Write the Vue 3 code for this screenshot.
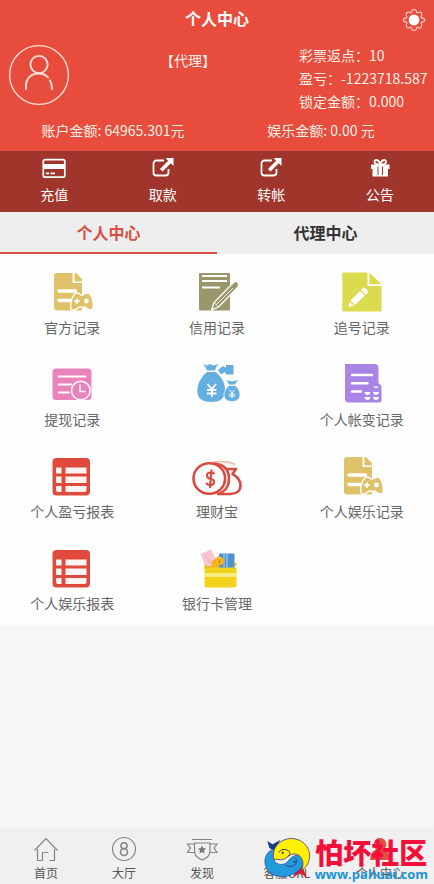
<script setup>
import { ref } from 'vue'

const info = [
  { label: '彩票返点', value: '10' },
  { label: '盈亏', value: '-1223718.587' },
  { label: '锁定金额', value: '0.000' },
]
const actions = [
  { label: '充值', icon: 'card' },
  { label: '取款', icon: 'out' },
  { label: '转帐', icon: 'out' },
  { label: '公告', icon: 'gift' },
]
const tabs = ['个人中心', '代理中心']
const activeTab = ref(0)
const items = [
  { label: '官方记录', icon: 'game' },
  { label: '信用记录', icon: 'credit' },
  { label: '追号记录', icon: 'chase' },
  { label: '提现记录', icon: 'withdraw' },
  { label: '', icon: 'bags' },
  { label: '个人帐变记录', icon: 'ledger' },
  { label: '个人盈亏报表', icon: 'table' },
  { label: '理财宝', icon: 'purse' },
  { label: '个人娱乐记录', icon: 'game' },
  { label: '个人娱乐报表', icon: 'table' },
  { label: '银行卡管理', icon: 'wallet' },
]
const nav = [
  { label: '首页', icon: 'home' },
  { label: '大厅', icon: 'hall' },
  { label: '发现', icon: 'badge' },
  { label: '客服URL', icon: 'service' },
  { label: '个人中心', icon: 'me' },
]
</script>

<template>
  <div class="page">
    <header class="head">
      <div class="title-row">
        <h1>个人中心</h1>
        <button class="gear" aria-label="设置">
          <svg viewBox="0 0 24 24" width="24" height="24">
            <path d="M9.8 2.4 Q12 .6 14.2 2.4 Q14.2 4.6 15.4 4.8 Q17.4 3.6 18.6 4.3 Q20.6 5.6 19.5 8 Q18.6 9.4 19.6 9.9 Q22.4 9.8 22.7 12 Q22.4 14.2 19.6 14.1 Q18.6 14.8 19.6 16.2 Q20.4 18.4 18.6 19.7 Q17.4 20.4 15.4 19.2 Q14.2 19.4 14.2 21.6 Q12 23.4 9.8 21.6 Q9.8 19.4 8.6 19.2 Q6.6 20.4 5.4 19.7 Q3.6 18.4 4.4 16.2 Q5.4 14.8 4.4 14.1 Q1.6 14.2 1.3 12 Q1.6 9.8 4.4 9.9 Q5.4 9.4 4.5 8 Q3.4 5.6 5.4 4.3 Q6.6 3.6 8.6 4.8 Q9.8 4.6 9.8 2.4Z" fill="none" stroke="#fbd3cc" stroke-width="1.1" />
            <circle cx="12" cy="12" r="5.4" fill="#fff" />
          </svg>
        </button>
      </div>
      <div class="profile">
        <svg class="avatar" viewBox="0 0 60 60" width="60" height="60" fill="none" stroke="#fde0d6">
          <circle cx="30" cy="30" r="29.4" stroke-width="1.4" />
          <g stroke-width="1.9" stroke-linecap="round">
            <circle cx="30" cy="19.5" r="8.6" />
            <path d="M17 44 V41 C17 33.5 22 28.5 30 28.5 C34 28.5 37 30 39 32.5 M41 35.5 C42.3 38 43 40 43 44" />
          </g>
        </svg>
        <p class="role">【代理】</p>
        <div class="info">
          <p v-for="row in info" :key="row.label">{{ row.label }}：{{ row.value }}</p>
        </div>
      </div>
      <div class="balances">
        <p>账户金额: 64965.301元</p>
        <p>娱乐金额: 0.00 元</p>
      </div>
    </header>

    <div class="actions">
      <button v-for="a in actions" :key="a.label">
        <svg viewBox="0 0 24 22" width="24" height="22">
          <template v-if="a.icon === 'card'">
            <rect x="1.3" y="2.7" width="21.5" height="17.5" rx="2" fill="none" stroke="#fff" stroke-width="1.7" />
            <path d="M2 7h20.5v5H2zM4 15.5h3v1.7H4zM8.500 15.5h4.5v1.7H8.500z" fill="#fff" />
          </template>
          <template v-else-if="a.icon === 'out'">
            <path d="M13 3.5H5.5a3 3 0 0 0-3 3v9a3 3 0 0 0 3 3h9a3 3 0 0 0 3-3V12" fill="none" stroke="#fff" stroke-width="1.8" />
            <path d="M14.5 1H22.5V9L19.8 6.3L11.5 14.5L9 12L17.2 3.7Z" fill="#fff" />
          </template>
          <template v-else>
            <path d="M3 7.5h18.5v4.5H20v7.5H4.5V12H3z" fill="#fff" />
            <path d="M12.2 7.5C10 7.5 6.5 7.5 6.5 5C6.5 2 10.5 2 12.2 7C14 2 18 2 18 5C18 7.5 14.5 7.5 12.2 7.500Z" fill="none" stroke="#fff" stroke-width="1.8" />
            <path d="M10 9.5v8.500M14.5 9.5v8.500" stroke="#a0362b" stroke-width="1" />
          </template>
        </svg>
        <span>{{ a.label }}</span>
      </button>
    </div>

    <div class="tabs" role="tablist">
      <button v-for="(t, i) in tabs" :key="t" role="tab" :aria-selected="activeTab === i" :class="{ active: activeTab === i }" @click="activeTab = i">{{ t }}</button>
    </div>

    <main class="grid">
      <button v-for="item in items" :key="item.label" :aria-label="item.label || '资金'">
        <svg viewBox="0 0 40 40" width="40" height="40">
          <template v-if="item.icon === 'game'">
            <path d="M5 1H20.5V11H30V38.5H5Q2 38.5 2 35.5V4Q2 1 5 1Z" fill="#dfc169" />
            <path d="M22.5 1H24L30 7V9.5H22.5Z" fill="#dfc169" />
            <path d="M7 19H23.5M7 28.5H18" stroke="#fff" stroke-width="3.4" stroke-linecap="round" />
            <path d="M24 22C26.5 21 28 24 30 24C32 24 34 21 36.5 22C39.5 23.5 41 32 40.5 35.5C39.5 39 35.5 36.5 33.5 34.5H26.5C24.5 36.5 20.5 39 19.5 36C18.8 32 21 23.5 24 22Z" fill="#dfc169" stroke="#fff" stroke-width="3" paint-order="stroke" />
            <path d="M25 26.5V32M22.2 29.2H27.8" stroke="#fff" stroke-width="1.8" />
            <circle cx="34.5" cy="29" r="2.4" fill="#fff" />
          </template>
          <template v-else-if="item.icon === 'credit'">
            <rect x="2" y="1" width="31" height="37.5" rx="1" fill="#99976b" />
            <path d="M5 4H30M5 9H30M5 15.5H23" stroke="#fff" stroke-width="1.8" />
            <path d="M35.5 11.5Q38.5 8 41 10.5Q43 13 40.5 15.5L21.5 35L14.5 38L17 30.500Z" fill="#99976b" stroke="#fff" stroke-width="1.3" />
            <path d="M17 30.5L21.5 35M19.500 32.500L36 16" stroke="#fff" stroke-width=".9" />
          </template>
          <template v-else-if="item.icon === 'chase'">
            <path d="M1 .5H25.5V14H39.5V39.5H1Q.3 39.5 .3 38.8V1.2Q.3 .5 1 .5Z" fill="#dadb4e" />
            <path d="M27.3 .5L39.5 12.3H27.3Z" fill="#dadb4e" />
            <path d="M6.5 35L8 29L21 16Q22.500 15 25 17.500Q26.500 19.500 25.500 21L12.500 33.500Z" fill="#fff" />
            <path d="M8 29L12.500 33.500M18.500 18.500L23 23" stroke="#dadb4e" stroke-width="1.2" />
          </template>
          <template v-else-if="item.icon === 'withdraw'">
            <rect x=".5" y="4.5" width="39" height="31.5" rx="3.5" fill="#e884bb" />
            <path d="M7 12.500H33.500M7 20.500H19M7 28.500H17" stroke="#fff" stroke-width="2" stroke-linecap="round" />
            <circle cx="28.8" cy="26.5" r="9.3" fill="#e884bb" stroke="#fff" stroke-width="1.5" />
            <path d="M28 20.500V27.500H33.500" fill="none" stroke="#fff" stroke-width="1.5" />
          </template>
          <template v-else-if="item.icon === 'bags'">
            <path d="M6 0L10 1.500L13 0L16 1.500L21.500 0Q18.500 3 18 6.500H10Q9 3 6 0Z" fill="#62afe0" />
            <path d="M10 8H18.500C24 12 28.500 19 28 27C27.500 35 23 38 14 38C5 38 .3 34 .3 27C.3 19 5 12 10 8Z" fill="#62afe0" />
            <path d="M21 6L26 2L29 4V1H36.500V10.500H29L28 8L24 10.500Z" fill="#62afe0" />
            <path d="M29 16L35 17.500L41 16Q38.500 18.500 38 20.500H32Q31.500 18 29 16Z" fill="#62afe0" />
            <path d="M32 21.500H38C41 23.500 43 27 43 30.500C43 35 40 37.500 35 37.500C30 37.500 27 35 27 30.500C27 27 29.500 23.500 32 21.500Z" fill="#62afe0" stroke="#fff" stroke-width=".7" />
            <path d="M10.500 20L14.800 25L19 20M14.800 25V33M10 26H19.500M10 29.500H19.500" fill="none" stroke="#fff" stroke-width="1.8" />
            <path d="M32.500 26L35 29L37.500 26M35 29V34M32 30H38M32 32H38" fill="none" stroke="#fff" stroke-width="1" />
          </template>
          <template v-else-if="item.icon === 'ledger'">
            <path d="M4 0H32.500Q36.500 0 36.500 4V19L39.500 22V36Q39.500 38.500 37 38.500H6.500Q3 38.500 3 35V1Q3 0 4 0Z" fill="#a985e6" />
            <path d="M10 11H30M10 19.200H25.500M10 27.500H19" stroke="#fff" stroke-width="2.4" stroke-linecap="round" />
            <path d="M31 22.500H37Q34 25.500 31 22.500ZM22.500 28H28.500Q28 31 25.500 31Q23 31 22.500 28ZM31 28H37Q36.500 31 34 31Q31.500 31 31 28ZM22.500 33H28.500Q28 36 25.500 36Q23 36 22.500 33ZM31 33H37Q36.500 36 34 36Q31.500 36 31 33Z" fill="#fff" />
          </template>
          <template v-else-if="item.icon === 'table'">
            <rect x=".5" y="2" width="37.5" height="37.5" rx="4" fill="#e04a3c" />
            <g fill="#fff4f2">
              <path d="M4 11.500H9.500V17.500H4zM4 20.500H9.500V27H4zM4 30H9.500V36H6Q4 36 4 34z" />
              <path d="M13.500 11.500H34.500V17.500H13.500zM13.500 20.500H34.500V27H13.500zM13.500 30H34.500V34Q34.500 36 32.500 36H13.500z" />
            </g>
          </template>
          <template v-else-if="item.icon === 'purse'">
            <path d="M16 6Q28 4 38.500 8.500" fill="none" stroke="#edb8a6" stroke-width="1.500" />
            <g fill="none" stroke="#d94a40" stroke-width="2.600">
              <ellipse cx="12.300" cy="22.500" rx="15.800" ry="15.300" />
              <path d="M16 7.500C27 8 32 14 32 23C32 31 27 36 21.500 38" />
              <path d="M29 13H39L35.500 18C41 21 43.500 25 43.500 29.500C43.500 35 39 38 33 38H20" stroke-linejoin="round" />
            </g>
            <path d="M17.500 18Q15.500 16 13 16.500Q9.500 17 10 20Q10.500 22.300 13.500 22.800Q17.500 23.500 17 26.500Q16.500 29 13 29Q10.500 29 9 27M14.500 13.500L13 32" fill="none" stroke="#d94a40" stroke-width="2.100" />
          </template>
          <template v-else>
            <path d="M3.500 6L14 1.500L22 16L9 20Z" fill="#f5c6d0" />
            <path d="M8 7L14 16" stroke="#efaebf" stroke-width="1" />
            <path d="M7.500 16L10 18H39.500V16Q39 14 37.500 14V21H7.500Z" fill="#edb51f" />
            <rect x="22" y="5.500" width="15.500" height="15" rx="1" fill="#4b92cf" />
            <path d="M27 6V19M30 6V19" stroke="#a8d1ed" stroke-width="1.200" />
            <circle cx="18.500" cy="15.500" r="4" fill="#f4b71b" />
            <circle cx="22.500" cy="13" r="4.300" fill="#f6bf23" stroke="#e99b13" stroke-width=".7" />
            <path d="M21 11L22.500 13L24 11M22.500 13V16M20.500 14H24.500" fill="none" stroke="#e07f10" stroke-width=".8" />
            <path d="M7.500 19.500H39.500V37.500Q39.500 39.500 37.500 39.500H9.500Q7.500 39.500 7.500 37.500Z" fill="#f3d21c" />
            <path d="M7.500 25H39.500V29H7.500Z" fill="#f9eb86" />
          </template>
        </svg>
        <span>{{ item.label }}</span>
      </button>
    </main>

    <footer class="foot">
      <nav>
        <a v-for="n in nav" :key="n.label" href="#">
          <svg viewBox="0 0 24 24" width="24" height="24" fill="none" stroke="#858585" stroke-width="1.2">
            <path v-if="n.icon === 'home'" d="M.5 13.5L12 1.5L23.5 13.5M3.5 12V23.5H8.5M15.5 23.5H20.5V12M8.500 23.5V15.5H14.5" />
            <template v-else-if="n.icon === 'hall'">
              <circle cx="12" cy="12" r="11.5" />
              <circle cx="12" cy="8.8" r="3" stroke-width="1.6" />
              <circle cx="12" cy="15" r="3.5" stroke-width="1.6" />
            </template>
            <template v-else-if="n.icon === 'badge'">
              <path d="M2 2.5H22M4.500 6H20V14Q20 20 12.300 23Q4.500 20 4.500 14ZM4.500 7H-2.500L.5 11L-2.500 15.500H4.500M20 7H27L24 11L27 15.500H20" />
              <path d="M12 8.500L13.300 11.200L16.200 11.600L14 13.600L14.600 16.600L12 15.100L9.400 16.600L10 13.600L7.800 11.600L10.700 11.200Z" fill="#777" stroke="none" />
            </template>
            <path v-else-if="n.icon === 'me'" d="M12 1A6.500 6.500 0 0 1 16 12.500Q22 15 22 23H2Q2 15 8 12.500A6.500 6.500 0 0 1 12 1Z" fill="#df5145" stroke="none" />
          </svg>
          <span>{{ n.label }}</span>
        </a>
      </nav>
      <div class="brand">
        <svg viewBox="40 50 141 126" width="47" height="42">
          <path d="M50 62L66 72L90 58L78 76L72 94L56 82Z" fill="#173f88" />
          <path d="M118 145L140 142L156 126L158 146L168 172L148 158L130 170L134 154Z" fill="#e51c2c" />
          <path d="M74 86C48 88 36 118 46 140C58 170 96 174 122 164C146 154 166 134 156 114C146 98 126 104 114 120C104 138 76 136 70 118C66 104 70 94 74 86Z" fill="#219bdd" stroke="#254795" stroke-width="2" />
          <path d="M70 118C60 82 92 50 130 55C164 60 184 92 175 120C172 134 162 146 152 149C162 130 156 108 138 102C120 96 110 114 96 118C86 120 76 114 70 118Z" fill="#fff100" stroke="#5b367c" stroke-width="2.5" />
          <path d="M84 96Q96 82 112 90Q124 98 112 108M104 134Q120 144 134 132Q144 122 134 114" fill="none" stroke="#45427b" stroke-width="3" />
          <circle cx="96" cy="97" r="3" fill="#222" />
          <circle cx="132" cy="124" r="3" fill="#153261" />
        </svg>
        <div class="brand-text">
          <strong>怕坏社区</strong>
          <span>www.pahuai.com</span>
        </div>
      </div>
    </footer>
  </div>
</template>

<style>
body {
  margin: 0;
  background: #f6f6f6;
}
</style>

<style scoped>
.page {
  display: flex;
  flex-direction: column;
  min-height: 100vh;
  font-family: "Noto Sans CJK SC", "Noto Sans", sans-serif;
  font-size: 14px;
  color: #666;
}
p,
h1 {
  margin: 0;
}
button {
  border: 0;
  padding: 0;
  background: none;
  font: inherit;
  color: inherit;
  cursor: pointer;
}
svg {
  display: block;
  overflow: visible;
}
.head {
  background: #e74c3d;
  color: #fff0e8;
  padding-bottom: 10px;
}
.title-row {
  display: grid;
  grid-template-columns: 1fr auto 1fr;
  align-items: center;
  height: 36px;
  padding: 0 8px;
}
.title-row h1 {
  grid-column: 2;
  font-size: 16px;
  line-height: 24px;
  font-weight: 700;
  color: #fff;
}
.gear {
  justify-self: end;
  padding-top: 3px;
}
.profile {
  display: grid;
  grid-template-columns: 60px 1fr 126px;
  padding: 8px 9px 0;
}
.role {
  padding: 5px 0 0 8px;
  line-height: 22px;
  text-align: center;
}
.info {
  line-height: 23px;
  white-space: nowrap;
}
.avatar {
  margin-top: 1px;
}
.balances {
  display: grid;
  grid-template-columns: 1fr 1fr;
  padding: 6px 9px 0;
  line-height: 22px;
  text-align: center;
}
.actions {
  display: grid;
  grid-template-columns: repeat(4, 1fr);
  background: #a0362b;
  color: #fff;
}
.actions button {
  display: flex;
  flex-direction: column;
  align-items: center;
  gap: 5px;
  padding: 6px 0 8px;
  line-height: 20px;
}
.tabs {
  display: grid;
  grid-template-columns: 1fr 1fr;
  background: #eeeeef;
}
.tabs button {
  padding: 8px 0;
  border-bottom: 2px solid #eeeeef;
  font-size: 16px;
  line-height: 24px;
  font-weight: 700;
  color: #333;
}
.tabs .active {
  color: #d94f43;
  border-bottom-color: #d94f43;
}
.grid {
  display: grid;
  grid-template-columns: repeat(3, 1fr);
  padding-bottom: 4px;
  background: #fefefe;
}
.grid button {
  display: flex;
  flex-direction: column;
  align-items: center;
  gap: 5px;
  padding: 18px 0 9px;
  line-height: 20px;
}
.grid span {
  min-height: 20px;
}
.foot {
  position: relative;
  margin-top: auto;
  background: #f0f0f0;
  box-shadow: 0 -1px 3px #e4e4e4;
}
.foot nav {
  display: grid;
  grid-template-columns: 78fr 78fr 78fr 92fr 94fr;
  padding: 6px 7px 3px;
}
.foot a {
  display: flex;
  flex-direction: column;
  align-items: center;
  gap: 4px;
  font-size: 12px;
  line-height: 16px;
  color: #555;
  text-decoration: none;
}
.brand {
  position: absolute;
  right: 6px;
  bottom: 3px;
  display: flex;
  align-items: flex-start;
  gap: 4px;
  pointer-events: none;
}
.brand-text {
  display: flex;
  flex-direction: column;
  align-items: center;
}
.brand strong {
  font-size: 28px;
  line-height: 30px;
  font-weight: 900;
  color: #f40f3a;
}
.brand span {
  font-family: "Open Sans", sans-serif;
  font-size: 13px;
  line-height: 14px;
  font-weight: 700;
  color: #1b95d8;
}
</style>
